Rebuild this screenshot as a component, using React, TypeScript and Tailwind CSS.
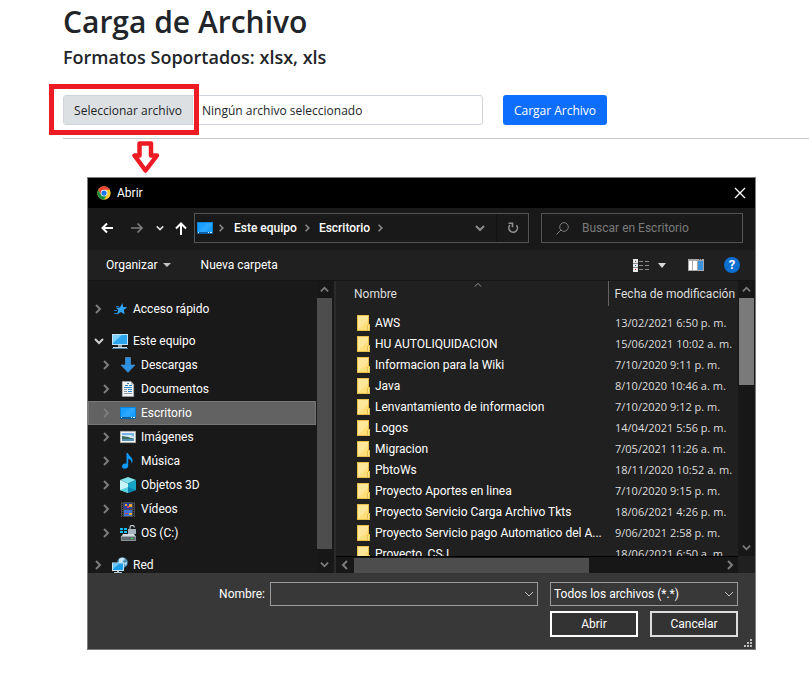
import React, { useRef, useState } from 'react';

type IconName = 'star' | 'pc' | 'download' | 'document' | 'desktop' | 'image' | 'music' | 'cube' | 'video' | 'drive' | 'network';

interface TreeItem {
  label: string;
  icon: IconName;
  child?: boolean;
  open?: boolean;
}

interface FileRow {
  name: string;
  date: string;
}

const quickAccess: TreeItem[] = [{ label: 'Acceso rápido', icon: 'star' }];

const computer: TreeItem[] = [
  { label: 'Este equipo', icon: 'pc', open: true },
  { label: 'Descargas', icon: 'download', child: true },
  { label: 'Documentos', icon: 'document', child: true },
  { label: 'Escritorio', icon: 'desktop', child: true },
  { label: 'Imágenes', icon: 'image', child: true },
  { label: 'Música', icon: 'music', child: true },
  { label: 'Objetos 3D', icon: 'cube', child: true },
  { label: 'Vídeos', icon: 'video', child: true },
  { label: 'OS (C:)', icon: 'drive', child: true },
];

const network: TreeItem[] = [{ label: 'Red', icon: 'network' }];

const files: FileRow[] = [
  { name: 'AWS', date: '13/02/2021 6:50 p. m.' },
  { name: 'HU AUTOLIQUIDACION', date: '15/06/2021 10:02 a. m.' },
  { name: 'Informacion para la Wiki', date: '7/10/2020 9:11 p. m.' },
  { name: 'Java', date: '8/10/2020 10:46 a. m.' },
  { name: 'Lenvantamiento de informacion', date: '7/10/2020 9:12 p. m.' },
  { name: 'Logos', date: '14/04/2021 5:56 p. m.' },
  { name: 'Migracion', date: '7/05/2021 11:26 a. m.' },
  { name: 'PbtoWs', date: '18/11/2020 10:52 a. m.' },
  { name: 'Proyecto Aportes en linea', date: '7/10/2020 9:15 p. m.' },
  { name: 'Proyecto Servicio Carga Archivo Tkts', date: '18/06/2021 4:26 p. m.' },
  { name: 'Proyecto Servicio pago Automatico del A...', date: '9/06/2021 2:58 p. m.' },
  { name: 'Proyecto_CSJ', date: '18/06/2021 6:50 a. m.' },
];

const chevronPaths = {
  right: 'M2 1l4 4-4 4',
  left: 'M7 1L3 5l4 4',
  down: 'M1 3l4 4 4-4',
  up: 'M1 7l4-4 4 4',
};

const Chevron = ({ dir, className }: { dir: keyof typeof chevronPaths; className: string }) => (
  <svg viewBox="0 0 10 10" fill="none" stroke="currentColor" className={`shrink-0 ${className}`}>
    <path d={chevronPaths[dir]} />
  </svg>
);

const DesktopShape = () => (
  <>
    <path fill="#0a84dc" d="M0 2h16v12H0z" />
    <path fill="#1a9fff" d="M1 3h14v9H1z" />
    <path fill="#3cb0ff" d="M1 12L10 3h5v2l-7 7z" opacity=".5" />
    <path fill="#0b5fa5" d="M0 12h16v2H0z" />
    <path fill="#d8f0ff" d="M1 12h1v1H1zM11 12h1v1h-1zM13 12h2v1h-2z" />
  </>
);

const TreeIcon = ({ name }: { name: IconName }) => (
  <svg viewBox="0 0 16 16" className="h-4 w-4 shrink-0">
    {name === 'star' && (
      <>
        <path fill="#2fa4f0" d="M10.500 2l.6 4 4.200.3-3.500 2.600.8 4.300-3.800-2.200-4 2.700 1.500-4.600L4 6.800l3.900-.4z" />
        <path stroke="#1c78c8" d="M4 5.500h3M2 9.500h3M2 12.500h3" />
      </>
    )}
    {name === 'pc' && (
      <>
        <path fill="#bfe4fa" d="M0 1h16v11H0z" />
        <path fill="#2aa5ee" d="M1 2h14v9H1z" />
        <path fill="#7fd0fa" d="M1 2h9L1 10z" />
        <path fill="#9aa7b0" d="M6 12h4v2H6z" />
        <path fill="#cdd8df" d="M1 14h14v1H1z" />
        <path fill="#4b86ad" d="M0 15h16v1H0z" />
      </>
    )}
    {name === 'download' && <path fill="#2f8fe0" stroke="#5aa9ec" strokeWidth=".5" d="M5.500.5h5V8H15l-7 7.500L1 8h4.500z" />}
    {name === 'document' && (
      <>
        <path fill="#f4f4f4" stroke="#a8a8a8" strokeWidth=".6" d="M2.300.5H11l2.700 3v12H2.300z" />
        <path fill="#b8b8b8" d="M11 .5l2.700 3H11z" />
        <path stroke="#2485cf" d="M7 2.500h2M5 4.500h3M9 4.500h3M4 6.500h8M8 8.500h4M8 10.500h4" />
        <path stroke="#8b98a2" d="M4 8.500h3M4 10.500h3M4 12.500h8" />
      </>
    )}
    {name === 'desktop' && <DesktopShape />}
    {name === 'image' && (
      <>
        <path fill="#f2f2f2" stroke="#b0b0b0" strokeWidth=".5" d="M.300 2.300h15.400v11.400H.300z" />
        <path fill="#77b3e8" d="M2 4h12v8H2z" />
        <path fill="#d5eaf8" d="M2 6h9l3 2v1H2z" />
        <path fill="#3c6a5c" d="M2 7l6 1 6 2v1H2z" />
        <path fill="#5590b8" d="M2 10h12v2H2z" />
      </>
    )}
    {name === 'music' && (
      <path fill="#0d99ff" d="M6.500 0H8c.5 3 4.600 4 4.600 7.500 0 1.300-.4 2.300-1.100 3 .4-2.400-.7-4-3.300-4.800v7c0 1.800-1.600 3-3.500 3S2 14.800 2 13.300 3.500 10.500 5.200 10.500c.5 0 1 .1 1.300.2z" />
    )}
    {name === 'cube' && (
      <>
        <path fill="#7fe3ee" d="M8 0l8 3-8 3.500L0 3z" />
        <path fill="#c6f5f8" d="M0 3l8 3.500V16l-8-3z" />
        <path fill="#16a5c6" d="M16 3L8 6.500V16l8-3z" />
        <path fill="#5ad1e0" d="M0 13l8-3v6z" />
        <path fill="#0b86b3" d="M16 13l-8-3v6z" />
      </>
    )}
    {name === 'video' && (
      <>
        <path fill="#4a4a4a" d="M1 1h14v15H1z" />
        <path stroke="#111" strokeDasharray="1 1" d="M2.500 1v15M13.500 1v15" />
        <path fill="#263ea0" d="M4 2h8v6H4z" />
        <path fill="#3f74d6" d="M4 9h8v6H4z" />
        <path fill="#e6a82c" d="M5 3h2v2H5zM9 3h3v3H9zM9 12h3v2H9z" />
        <path fill="#cf3f57" d="M7 5h2v2H7zM5 12h3v1H5z" />
      </>
    )}
    {name === 'drive' && (
      <>
        <path fill="#15bdf2" d="M0 3h3v2H0zM4 3h3v2H4zM0 6h3v2H0zM4 6h3v2H4z" />
        <path fill="none" stroke="#b9c3ca" strokeWidth="1.200" d="M10 5V2.500a2.200 2.200 0 0 1 4.400 0" />
        <path fill="#a8b4bd" d="M8 4h8v5H8z" />
        <path fill="#d4dbe0" d="M3 9h11l2 3H1z" />
        <path fill="#5f6970" stroke="#bfc7cc" strokeWidth=".6" d="M1.300 11.300h14.400v4.200H1.300z" />
        <path fill="#3be04c" d="M11 13h2v1h-2z" />
      </>
    )}
    {name === 'network' && (
      <>
        <circle cx="10.500" cy="5.500" r="5.300" fill="#4e91bd" />
        <path fill="#c3e2f2" d="M7 2c2-2 5-1.500 6 0l-2 2-1 3-3-1zM12 6l3-1-1 4z" />
        <path fill="#c4e8fb" d="M0 5.500h12v8.500H0z" />
        <path fill="#1c9be8" d="M1 6.500h10V13H1z" />
        <path fill="#6cc6f7" d="M1 6.500h7L1 12z" />
        <path fill="#b6c4cc" d="M5 14h2v1H5zM2 15h8v1H2z" />
      </>
    )}
  </svg>
);

const ChromeLogo = () => (
  <svg viewBox="0 0 48 48" className="h-3.5 w-3.5">
    <circle cx="24" cy="24" r="23" fill="#fcc934" />
    <path fill="#ea4335" d="M4.100 12.500A23 23 0 0 1 43.900 12.500H24L14 30z" />
    <path fill="#1e8e3e" d="M4.100 12.500A23 23 0 0 0 24 47l10-17.300H14z" />
    <circle cx="24" cy="24" r="11.500" fill="#fff" />
    <circle cx="24" cy="24" r="9" fill="#1a73e8" />
  </svg>
);

const FolderIcon = () => (
  <svg viewBox="0 0 13 16" className="h-4 w-[13px] shrink-0">
    <path fill="#e9c04c" d="M0 0h12v9h1v7H0z" />
    <path fill="#ffe799" d="M1 1h10v14H1z" />
    <path fill="#ffdf7c" d="M1 15L11 5v10z" />
    <path fill="#e9c04c" d="M10 10h1v5h-1z" />
    <path fill="#ffe799" d="M11 10h1v5h-1z" />
  </svg>
);

const TreeRow = ({ item, selected, onSelect }: { item: TreeItem; selected: boolean; onSelect: () => void }) => (
  <li>
    <button
      type="button"
      onClick={onSelect}
      className={`flex h-6 w-full items-center border text-left whitespace-nowrap ${item.child ? 'pl-[13px]' : 'pl-[5px]'} ${
        selected ? 'border-[#777777] bg-[#626262]' : 'border-transparent'
      }`}
    >
      <Chevron dir={item.open ? 'down' : 'right'} className={`h-2.5 w-2.5 stroke-2 ${item.open ? 'text-[#d0d0d0]' : 'text-[#7c7c7c]'}`} />
      <span className="mr-[5px] ml-2">
        <TreeIcon name={item.icon} />
      </span>
      {item.label}
    </button>
  </li>
);

const TitleBar = () => (
  <div className="flex h-[30px] items-center bg-black pr-[7px] pl-[9px]">
    <ChromeLogo />
    <h2 className="ml-1.5 flex-1">Abrir</h2>
    <button type="button" aria-label="Cerrar" className="p-0.5">
      <svg viewBox="0 0 12 12" className="h-3 w-3" stroke="#fff" strokeWidth="1.300">
        <path d="M1 1l10 10M11 1L1 11" />
      </svg>
    </button>
  </div>
);

const NavBar = () => (
  <div className="flex h-[42px] items-center bg-[#191919] pr-3 pb-0.5 pl-[13px]">
    <button type="button" aria-label="Atrás" className="mr-[18px]">
      <svg viewBox="0 0 12 12" className="h-3 w-3" fill="none" stroke="#fff" strokeWidth="2">
        <path d="M12 6H1.500M6 1.500L1.500 6 6 10.500" />
      </svg>
    </button>
    <button type="button" aria-label="Adelante" className="mr-[13px]">
      <svg viewBox="0 0 12 12" className="h-3 w-3" fill="none" stroke="#7d7d7d" strokeWidth="1.600">
        <path d="M0 6h11M6.500 1.500L11 6l-4.500 4.500" />
      </svg>
    </button>
    <button type="button" aria-label="Ubicaciones recientes" className="mr-[11px]">
      <Chevron dir="down" className="h-2 w-2 stroke-2 text-[#e0e0e0]" />
    </button>
    <button type="button" aria-label="Subir" className="mr-[7px]">
      <svg viewBox="0 0 12 13" className="h-[13px] w-3" fill="none" stroke="#fff" strokeWidth="2">
        <path d="M6 13V2M1 6.500l5-5 5 5" />
      </svg>
    </button>
    <nav aria-label="Ruta" className="mr-3 flex h-[30px] flex-1 items-center border border-[#535353] pl-0.5 font-medium">
      <svg viewBox="0 0 16 16" className="h-4 w-4 shrink-0">
        <DesktopShape />
      </svg>
      <Chevron dir="right" className="mr-2 ml-[5px] h-2 w-2 stroke-2 text-[#8a8a8a]" />
      <a href="#equipo" className="whitespace-nowrap">Este equipo</a>
      <Chevron dir="right" className="mx-[7px] h-2 w-2 stroke-2 text-[#8a8a8a]" />
      <a href="#escritorio" className="whitespace-nowrap">Escritorio</a>
      <Chevron dir="right" className="ml-[7px] h-2 w-2 stroke-2 text-[#8a8a8a]" />
      <button type="button" aria-label="Ubicaciones anteriores" className="mr-[11px] ml-auto">
        <Chevron dir="down" className="h-2.5 w-2.5 stroke-2 text-[#8a8a8a]" />
      </button>
      <button type="button" aria-label="Actualizar" className="flex h-full w-8 items-center justify-center border-l border-[#121212]">
        <svg viewBox="0 0 12 12" className="h-3 w-3" fill="none" stroke="#909090" strokeWidth="1.600">
          <path d="M9.500 3.200A4.300 4.300 0 1 1 3 3" />
          <path d="M1.500 1.300h4v4" />
        </svg>
      </button>
    </nav>
    <label className="flex h-[30px] w-[202px] items-center border border-[#535353] pl-3.5">
      <svg viewBox="0 0 13 13" className="h-[13px] w-[13px] shrink-0" fill="none" stroke="#7d7d7d">
        <circle cx="8" cy="5" r="4.300" />
        <path d="M5 8L.5 12.500" />
      </svg>
      <input
        type="search"
        aria-label="Buscar"
        placeholder="Buscar en Escritorio"
        className="ml-[13px] w-full min-w-0 bg-transparent outline-none placeholder:text-[#7a7a7a]"
      />
    </label>
  </div>
);

const Toolbar = () => (
  <div className="flex h-[31px] items-center border-b border-[#151515] bg-[#202020] pr-[15px] pl-[18px]">
    <button type="button" className="flex items-center gap-[5px]">
      Organizar
      <svg viewBox="0 0 8 4" className="h-1 w-2" fill="#c4c4c4">
        <path d="M0 0h8L4 4z" />
      </svg>
    </button>
    <button type="button" className="ml-[30px] flex-1 text-left">Nueva carpeta</button>
    <button type="button" aria-label="Cambiar la vista" className="flex items-center gap-[9px]">
      <svg viewBox="0 0 16 13" className="h-[13px] w-4">
        <path fill="#e8e8e8" d="M0 0h5v13H0z" />
        <path fill="#8c8c8c" d="M0 4h5v1H0zM0 8h5v1H0zM6 2h4v1H6zM12 2h4v1h-4zM6 6h4v1H6zM12 6h4v1h-4zM6 10h4v1H6zM12 10h4v1h-4z" />
        <path fill="#444" d="M2 2h1v1H2z" />
        <path fill="#2d6fd6" d="M2 6h1v1H2z" />
        <path fill="#d22" d="M2 10h1v1H2z" />
      </svg>
      <svg viewBox="0 0 8 5" className="h-[5px] w-2" fill="#d8d8d8">
        <path d="M0 0h8L4 5z" />
      </svg>
    </button>
    <button type="button" aria-label="Panel de vista previa" className="mr-5 ml-[22px]">
      <svg viewBox="0 0 16 12" className="h-3 w-4">
        <path fill="#a9a9a9" d="M0 0h16v12H0z" />
        <path fill="#fff" d="M1 2h3v9H1zM5 2h4v9H5z" />
        <path fill="#3b93dd" d="M10 2h5v9h-5z" />
        <path fill="#444" d="M11 0h1v1h-1zM13 0h1v1h-1z" />
      </svg>
    </button>
    <button
      type="button"
      aria-label="Ayuda"
      className="flex h-4 w-4 items-center justify-center rounded-full bg-[#0a6fd0] text-[13px] leading-4 font-bold"
    >
      ?
    </button>
  </div>
);

const Sidebar = () => {
  const [current, setCurrent] = useState('Escritorio');

  const renderItems = (items: TreeItem[]) => (
    <ul>
      {items.map((item) => (
        <TreeRow key={item.label} item={item} selected={item.label === current} onSelect={() => setCurrent(item.label)} />
      ))}
    </ul>
  );

  return (
    <aside className="flex w-[248px] shrink-0 border-r-2 border-[#2b2b2b] bg-[#191919]">
      <div className="flex w-[228px] flex-col gap-2 overflow-hidden pt-4">
        {renderItems(quickAccess)}
        {renderItems(computer)}
        {renderItems(network)}
      </div>
      <div className="ml-px flex w-[15px] flex-col items-center bg-[#171717]">
        <Chevron dir="up" className="my-1 h-[9px] w-[9px] stroke-2 text-[#7c7c7c]" />
        <div className="w-full flex-1 bg-[#4d4d4d]" />
        <Chevron dir="down" className="mt-[11px] mb-1 h-[9px] w-[9px] stroke-2 text-[#7c7c7c]" />
      </div>
    </aside>
  );
};

const FileList = () => (
  <div className="flex min-w-0 flex-1 bg-[#202020]">
    <div className="flex min-w-0 flex-1 flex-col">
      <div className="min-h-0 flex-1 overflow-hidden">
        <table className="w-full table-fixed border-collapse text-left whitespace-nowrap">
          <thead>
            <tr className="h-[25px] text-[#dedede]">
              <th scope="col" className="relative w-[272px] border-r border-[#636363] pl-[18px] font-normal">
                Nombre
                <Chevron dir="up" className="absolute top-0 left-[137px] h-2 w-2.5 text-[#b0b0b0]" />
              </th>
              <th scope="col" className="pl-1.5 font-normal">Fecha de modificación</th>
            </tr>
          </thead>
          <tbody className="before:block before:h-1.5">
            {files.map((file) => (
              <tr key={file.name} className="h-[21px]">
                <td className="p-0">
                  <span className="flex items-center gap-[5px] pl-[21px]">
                    <FolderIcon />
                    {file.name}
                  </span>
                </td>
                <td className="pl-[7px] font-['Open_Sans','Noto_Sans',sans-serif] text-[11px] text-[#dedede]">{file.date}</td>
              </tr>
            ))}
          </tbody>
        </table>
      </div>
      <div className="flex h-[17px] items-center border-t border-black bg-[#171717]">
        <Chevron dir="left" className="mx-1 h-2.5 w-2.5 stroke-2 text-[#7c7c7c]" />
        <div className="h-[15px] w-[235px] bg-[#4d4d4d]" />
        <Chevron dir="right" className="mr-0.5 ml-auto h-2.5 w-2.5 stroke-2 text-[#7c7c7c]" />
      </div>
    </div>
    <div className="mb-[17px] flex w-[17px] flex-col items-center bg-[#171717]">
      <Chevron dir="up" className="my-1 h-[9px] w-[9px] stroke-2 text-[#7c7c7c]" />
      <div className="h-[87px] w-[15px] bg-[#7a7a7a]" />
      <Chevron dir="down" className="mt-auto mb-1 h-[9px] w-[9px] stroke-2 text-[#7c7c7c]" />
    </div>
  </div>
);

const DialogFooter = () => (
  <div className="relative flex justify-end gap-3 bg-[#383838] pt-[9px] pr-[17px] pb-3">
    <div className="flex h-6 items-center gap-[5px]">
      <label htmlFor="nombre">Nombre:</label>
      <div className="flex h-6 w-[268px] items-center border border-[#9b9b9b] pr-[3px]">
        <input id="nombre" type="text" className="min-w-0 flex-1 bg-transparent px-1 outline-none" />
        <Chevron dir="down" className="h-2.5 w-2.5 text-[#c0c0c0]" />
      </div>
    </div>
    <div className="flex w-[188px] flex-col gap-[5px]">
      <div className="relative">
        <select aria-label="Tipo de archivo" className="h-6 w-full appearance-none border border-[#9b9b9b] bg-[#383838] px-[3px] outline-none">
          <option>Todos los archivos (*.*)</option>
        </select>
        <Chevron dir="down" className="pointer-events-none absolute top-[7px] right-1 h-2.5 w-2.5 text-[#c0c0c0]" />
      </div>
      <div className="grid grid-cols-2 gap-3">
        <button type="button" className="h-[26px] border-2 border-white bg-[#333333]">Abrir</button>
        <button type="button" className="h-[26px] border-2 border-[#dcdcdc] bg-[#333333]">Cancelar</button>
      </div>
    </div>
    <svg viewBox="0 0 8 8" className="absolute right-[3px] bottom-0.5 h-2 w-2" fill="#bdbdbd">
      <path d="M6 0h2v2H6zM3 3h2v2H3zM6 3h2v2H6zM0 6h2v2H0zM3 6h2v2H3zM6 6h2v2H6z" />
    </svg>
  </div>
);

const OpenDialog = () => (
  <section
    role="dialog"
    aria-label="Abrir"
    className="mt-[3px] mr-[53px] ml-6 border border-[#7d7d7d] font-['Roboto','Noto_Sans',sans-serif] text-[12px] leading-4 text-white"
  >
    <TitleBar />
    <NavBar />
    <Toolbar />
    <div className="flex h-[292px]">
      <Sidebar />
      <FileList />
    </div>
    <DialogFooter />
  </section>
);

export default function App() {
  const fileRef = useRef<HTMLInputElement>(null);
  const [fileName, setFileName] = useState('');

  const handleChange = (e: React.ChangeEvent<HTMLInputElement>) => {
    setFileName(e.target.files?.[0]?.name ?? '');
  };

  return (
    <main className="min-h-screen bg-white pt-0.5 pb-6 pl-[63px] font-['Open_Sans','Noto_Sans',sans-serif] text-[#212529]">
      <h1 className="text-[30px] leading-10 font-semibold">Carga de Archivo</h1>
      <p className="mt-[3px] text-[18px] leading-6 font-semibold">Formatos Soportados: xlsx, xls</p>

      <form className="mt-[26px] flex gap-5 text-[12px]" onSubmit={(e) => e.preventDefault()}>
        <div className="relative flex h-[30px] w-[420px] items-center rounded-[3px] border border-[#ced4da]">
          <label
            htmlFor="archivo"
            className="flex h-full w-[129px] cursor-pointer items-center justify-center rounded-l-[2px] border-r border-[#ced4da] bg-[#dde0e3] pt-0.5 whitespace-nowrap"
          >
            Seleccionar archivo
          </label>
          <input ref={fileRef} id="archivo" type="file" accept=".xlsx,.xls" onChange={handleChange} className="sr-only" />
          <span className="ml-[9px] truncate pt-0.5">{fileName || 'Ningún archivo seleccionado'}</span>
          <div className="pointer-events-none absolute -top-3 -left-[15px] h-[51px] w-[150px] border-[5px] border-[#ed1c24]" />
        </div>
        <button type="submit" className="h-[30px] w-[104px] rounded-[3px] bg-[#0d6efd] pt-0.5 whitespace-nowrap text-white">
          Cargar Archivo
        </button>
      </form>

      <hr className="mt-[13px] border-[#c7c8c9]" />

      <svg viewBox="0 0 28 33" className="mt-0.5 ml-[69px] h-[33px] w-7" fill="#fff" stroke="#ed1c24" strokeWidth="4.500" strokeLinejoin="round">
        <path d="M7.500 2.500h11.500v12h6L13.500 29.500 2.500 14.500h5z" />
      </svg>

      <OpenDialog />
    </main>
  );
}
